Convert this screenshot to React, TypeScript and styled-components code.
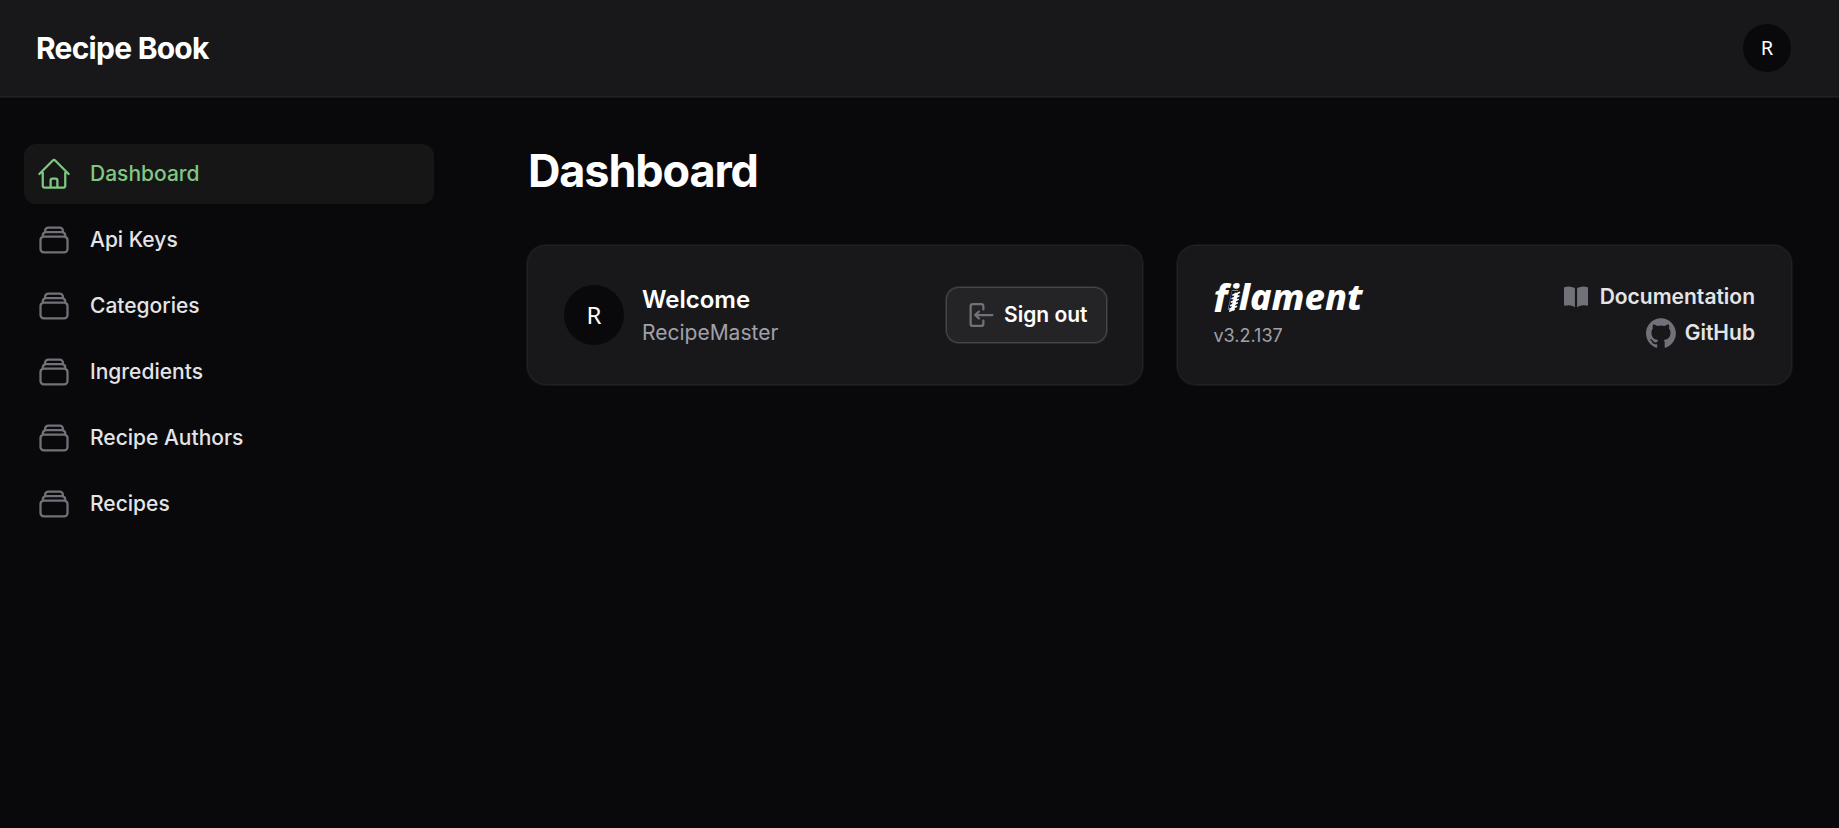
import React from "react";
import styled, { createGlobalStyle } from "styled-components";
import {
  HiOutlineHome,
  HiOutlineRectangleStack,
  HiMiniArrowLeftOnRectangle,
  HiMiniBookOpen,
} from "react-icons/hi2";

const GlobalStyle = createGlobalStyle`
  *, *::before, *::after { box-sizing: border-box; }
  body {
    margin: 0;
    background: #09090b;
    color: #fff;
    font-family: Inter, "Liberation Sans", sans-serif;
    font-size: 24px;
    line-height: 36px;
  }
  h1, h2, p, ul { margin: 0; padding: 0; }
  ul { list-style: none; }
  a { color: inherit; text-decoration: none; }
  button { font: inherit; color: inherit; border: 0; padding: 0; cursor: pointer; }
  svg { display: block; flex: none; }
`;

const Page = styled.div`
  min-height: 100vh;
  display: flex;
  flex-direction: column;
`;

const Topbar = styled.header`
  display: flex;
  align-items: center;
  justify-content: space-between;
  height: 96px;
  padding: 0 48px 0 36px;
  background: #18181b;
  box-shadow: 0 1px 0 #222224, 0 2px 0 #151518;
`;

const Brand = styled.a`
  font-size: 30px;
  line-height: 30px;
  font-weight: 700;
  letter-spacing: -0.025em;
`;

const Avatar = styled.span<{ $large?: boolean }>`
  display: flex;
  align-items: center;
  justify-content: center;
  flex: none;
  width: ${(p) => (p.$large ? 60 : 48)}px;
  height: ${(p) => (p.$large ? 60 : 48)}px;
  border-radius: 50%;
  background: #09090b;
  font-family: "Noto Sans", sans-serif;
  font-size: ${(p) => (p.$large ? 24 : 20)}px;
  font-weight: 400;
`;

const AvatarButton = styled.button`
  background: none;
  border-radius: 50%;
`;

const Body = styled.div`
  display: flex;
  flex: 1;
`;

const Sidebar = styled.nav`
  flex: none;
  width: 480px;
  padding: 48px 46px 48px 24px;
`;

const NavList = styled.ul`
  display: flex;
  flex-direction: column;
  gap: 6px;
`;

const NavLink = styled.a<{ $active?: boolean }>`
  display: flex;
  align-items: center;
  gap: 18px;
  padding: 12px;
  border-radius: 12px;
  font-size: 21px;
  font-weight: 500;
  color: ${(p) => (p.$active ? "#81c784" : "#e4e4e7")};
  background: ${(p) => (p.$active ? "#161617" : "transparent")};

  svg {
    color: ${(p) => (p.$active ? "#81c784" : "#71717a")};
  }
`;

const Main = styled.main`
  flex: 1;
  min-width: 0;
  display: flex;
  flex-direction: column;
  gap: 48px;
  padding: 48px;
`;

const PageTitle = styled.h1`
  font-size: 45px;
  line-height: 54px;
  font-weight: 700;
  letter-spacing: -0.025em;
`;

const Widgets = styled.div`
  display: grid;
  grid-template-columns: repeat(2, minmax(0, 1fr));
  gap: 36px;
`;

const Card = styled.section`
  display: flex;
  align-items: center;
  gap: 18px;
  padding: 36px;
  border-radius: 18px;
  background: #18181b;
  box-shadow: 0 0 0 1px #222224, 0 0 0 2px #151518;
`;

const CardBody = styled.div`
  flex: 1;
  min-width: 0;
`;

const CardTitle = styled.h2`
  font-size: 24px;
  line-height: 36px;
  font-weight: 600;
`;

const CardText = styled.p`
  font-size: 21px;
  line-height: 30px;
  color: #a1a1aa;
`;

const SignOut = styled.button`
  display: flex;
  align-items: center;
  gap: 9px;
  padding: 12px 18px;
  border-radius: 12px;
  background: #242427;
  box-shadow: 0 0 0 1px #464648, 0 0 0 2px #2d2d30;
  font-size: 21px;
  line-height: 30px;
  font-weight: 600;

  svg {
    color: #71717a;
  }
`;

const Logo = styled.a`
  position: relative;
  display: block;
  width: max-content;
  height: 30px;
  clip-path: inset(0 -6px 0 0);
  font-family: "Noto Sans", "Open Sans", sans-serif;
  font-size: 36px;
  line-height: 30px;
  font-weight: 800;
  font-style: italic;
  font-variant-ligatures: none;
`;

const Coil = styled.svg`
  position: absolute;
  left: 14px;
  top: 8px;
`;

const Version = styled.p`
  margin-top: 12px;
  font-size: 18px;
  line-height: 24px;
  color: #a1a1aa;
`;

const Links = styled.div`
  display: flex;
  flex-direction: column;
  align-items: flex-end;
  gap: 6px;
`;

const TextLink = styled.a`
  display: flex;
  align-items: center;
  gap: 9px;
  font-size: 21px;
  line-height: 30px;
  font-weight: 600;
  color: #e4e4e7;

  svg {
    color: #71717a;
  }
`;

const resources = ["Api Keys", "Categories", "Ingredients", "Recipe Authors", "Recipes"];

function GitHubMark() {
  return (
    <svg width="30" height="30" viewBox="0 0 98 96" fill="currentColor" aria-hidden="true">
      <path
        fillRule="evenodd"
        clipRule="evenodd"
        d="M48.854 0C21.839 0 0 22 0 49.217c0 21.756 13.993 40.172 33.405 46.69 2.427.49 3.316-1.059 3.316-2.362 0-1.141-.08-5.052-.08-9.127-13.59 2.934-16.42-5.867-16.42-5.867-2.184-5.704-5.42-7.17-5.42-7.17-4.448-3.015.324-3.015.324-3.015 4.934.326 7.523 5.052 7.523 5.052 4.367 7.496 11.404 5.378 14.235 4.074.404-3.178 1.699-5.378 3.074-6.6-10.839-1.141-22.243-5.378-22.243-24.283 0-5.378 1.94-9.778 5.014-13.2-.485-1.222-2.184-6.275.486-13.038 0 0 4.125-1.304 13.426 5.052a46.97 46.97 0 0 1 12.214-1.63c4.125 0 8.33.571 12.213 1.63 9.302-6.356 13.427-5.052 13.427-5.052 2.67 6.763.97 11.816.485 13.038 3.155 3.422 5.015 7.822 5.015 13.2 0 18.905-11.404 23.06-22.324 24.283 1.78 1.548 3.316 4.481 3.316 9.126 0 6.6-.08 11.897-.08 13.526 0 1.304.89 2.853 3.316 2.364 19.412-6.52 33.405-24.935 33.405-46.691C97.707 22 75.788 0 48.854 0z"
      />
    </svg>
  );
}

/* The spring that stands in for the stem of the logo's "i". */
function FilamentCoil() {
  return (
    <Coil width="13" height="22" viewBox="0 0 13 22" fill="none" aria-hidden="true">
      <path d="M4 0.5H12L8 21.5H0Z" fill="#18181b" />
      <path d="M8.5 3L4.5 20" stroke="#fff" strokeWidth="3.4" />
      <path
        d="M5 5L11.5 2.5M4.2 8.5L10.8 6M3.4 12L10 9.500M2.700 15.500L9.200 13M2 19L8.400 16.500M1.800 21L6 19.500"
        stroke="#fff"
        strokeWidth="1.7"
        strokeLinecap="round"
      />
    </Coil>
  );
}

export default function App() {
  return (
    <Page>
      <GlobalStyle />
      <Topbar>
        <Brand href="#">Recipe Book</Brand>
        <AvatarButton type="button" aria-label="User menu">
          <Avatar>R</Avatar>
        </AvatarButton>
      </Topbar>
      <Body>
        <Sidebar>
          <NavList>
            <li>
              <NavLink href="#" $active aria-current="page">
                <HiOutlineHome size={36} />
                Dashboard
              </NavLink>
            </li>
            {resources.map((name) => (
              <li key={name}>
                <NavLink href="#">
                  <HiOutlineRectangleStack size={36} />
                  {name}
                </NavLink>
              </li>
            ))}
          </NavList>
        </Sidebar>
        <Main>
          <PageTitle>Dashboard</PageTitle>
          <Widgets>
            <Card>
              <Avatar $large>R</Avatar>
              <CardBody>
                <CardTitle>Welcome</CardTitle>
                <CardText>RecipeMaster</CardText>
              </CardBody>
              <SignOut type="button">
                <HiMiniArrowLeftOnRectangle size={30} />
                Sign out
              </SignOut>
            </Card>
            <Card>
              <CardBody>
                <Logo href="#">
                  filament
                  <FilamentCoil />
                </Logo>
                <Version>v3.2.137</Version>
              </CardBody>
              <Links>
                <TextLink href="#">
                  <HiMiniBookOpen size={30} />
                  Documentation
                </TextLink>
                <TextLink href="#">
                  <GitHubMark />
                  GitHub
                </TextLink>
              </Links>
            </Card>
          </Widgets>
        </Main>
      </Body>
    </Page>
  );
}
